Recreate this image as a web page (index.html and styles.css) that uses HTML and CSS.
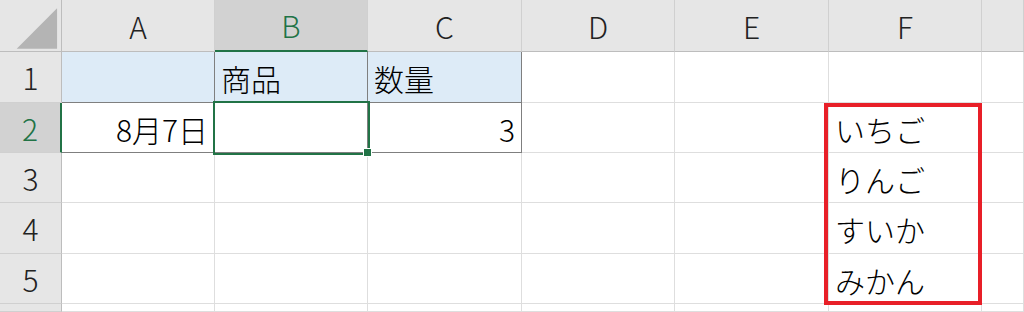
FILE: index.html
```html
<!DOCTYPE html>
<html lang="ja">
<head>
    <meta charset="UTF-8">
    <title>Sheet1</title>
    <link rel="stylesheet" href="styles.css">
</head>
<body>
    <div class="sheet">
        <!-- column headers -->
        <div class="corner">
            <svg width="62" height="52" viewBox="0 0 62 52"><polygon points="17,49 58,49 58,8" fill="#b4b4b4"/></svg>
        </div>
        <div class="hd">A</div>
        <div class="hd hd-sel">B</div>
        <div class="hd">C</div>
        <div class="hd">D</div>
        <div class="hd">E</div>
        <div class="hd">F</div>
        <div class="hd"></div>

        <!-- row 1 -->
        <div class="rh">1</div>
        <div class="c tbl head"></div>
        <div class="c tbl head">商品</div>
        <div class="c tbl head">数量</div>
        <div class="c"></div>
        <div class="c"></div>
        <div class="c"></div>
        <div class="c"></div>

        <!-- row 2 -->
        <div class="rh rh-sel">2</div>
        <div class="c tbl num">8月7日</div>
        <div class="c tbl active">
            <div class="selection"><span class="handle"></span></div>
        </div>
        <div class="c tbl num">3</div>
        <div class="c"></div>
        <div class="c"></div>
        <div class="c list">いちご
            <div class="list-box"></div>
        </div>
        <div class="c"></div>

        <!-- row 3 -->
        <div class="rh">3</div>
        <div class="c"></div>
        <div class="c"></div>
        <div class="c"></div>
        <div class="c"></div>
        <div class="c"></div>
        <div class="c">りんご</div>
        <div class="c"></div>

        <!-- row 4 -->
        <div class="rh">4</div>
        <div class="c"></div>
        <div class="c"></div>
        <div class="c"></div>
        <div class="c"></div>
        <div class="c"></div>
        <div class="c">すいか</div>
        <div class="c"></div>

        <!-- row 5 -->
        <div class="rh">5</div>
        <div class="c"></div>
        <div class="c"></div>
        <div class="c"></div>
        <div class="c"></div>
        <div class="c"></div>
        <div class="c">みかん</div>
        <div class="c"></div>

        <!-- row 6, cut off at the window edge -->
        <div class="rh"></div>
        <div class="c"></div>
        <div class="c"></div>
        <div class="c"></div>
        <div class="c"></div>
        <div class="c"></div>
        <div class="c"></div>
        <div class="c"></div>
    </div>
</body>
</html>
```

FILE: styles.css
```css
body {
    margin: 0;
    background: #fff;
    font-family: "Noto Sans CJK JP", sans-serif;
    overflow: hidden;
}
.sheet {
    display: grid;
    grid-template-columns: 62px 153px 153px 154px 153px 154px 153px 1fr;
    grid-template-rows: 52px 51px 50px 50px 51px 50px 8px;
    width: 1024px;
    height: 312px;
    font-size: 30px;
    font-weight: 300;
}
.sheet > div {
    box-sizing: border-box;
    display: flex;
    align-items: center;
    white-space: nowrap;
}
.corner {
    background: #e6e6e6;
    border-right: 1px solid #bdbdbd;
    border-bottom: 1px solid #bdbdbd;
}
.corner svg {
    display: block;
}
.hd {
    justify-content: center;
    background: #e6e6e6;
    color: #222;
    border-right: 1px solid #d0d0d0;
    border-bottom: 1px solid #bdbdbd;
}
.hd-sel {
    background: #d2d2d2;
    color: #217346;
    border-bottom: 2px solid #217346;
}
.rh {
    justify-content: center;
    background: #e6e6e6;
    color: #222;
    border-right: 1px solid #bdbdbd;
    border-bottom: 1px solid #d0d0d0;
}
.rh-sel {
    background: #d2d2d2;
    color: #217346;
    border-right: 2px solid #217346;
}
.c {
    padding: 2px 6px 0;
    color: #000;
    border-right: 1px solid #dedede;
    border-bottom: 1px solid #dedede;
}
.tbl {
    border-right-color: #7f7f7f;
    border-bottom-color: #7f7f7f;
}
.head {
    background: #ddebf7;
}
.num {
    justify-content: flex-end;
}

/* active cell outline with fill handle */
.active {
    position: relative;
}
.selection {
    position: absolute;
    left: -2px;
    top: -2px;
    width: 157px;
    height: 54px;
    box-sizing: border-box;
    border: 2px solid #217346;
}
.handle {
    position: absolute;
    left: 149px;
    top: 46px;
    width: 7px;
    height: 7px;
    background: #217346;
    outline: 1px solid #fff;
}

/* red frame around the F2:F5 list */
.list {
    position: relative;
}
.list-box {
    position: absolute;
    left: -5px;
    top: 0;
    width: 158px;
    height: 202px;
    box-sizing: border-box;
    border: 4px solid #e81f28;
}
```
